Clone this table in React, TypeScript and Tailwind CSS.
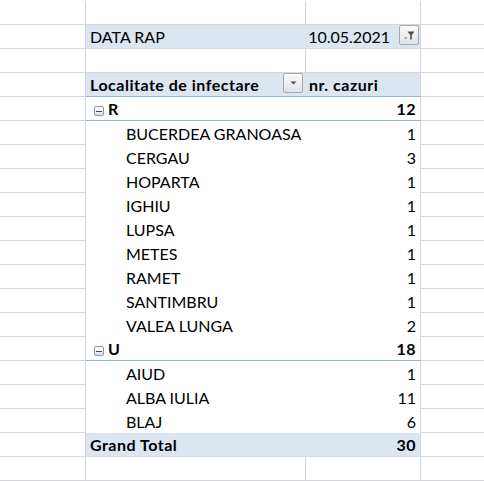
const GRID = "border-[#d4d8de]";

type Kind = "empty" | "filter" | "header" | "group" | "item" | "total";

type RowData = { kind: Kind; label?: string; value?: string };

const rows: RowData[] = [
  { kind: "empty" },
  { kind: "filter", label: "DATA RAP", value: "10.05.2021" },
  { kind: "empty" },
  { kind: "header", label: "Localitate de infectare", value: "nr. cazuri" },
  { kind: "group", label: "R", value: "12" },
  { kind: "item", label: "BUCERDEA GRANOASA", value: "1" },
  { kind: "item", label: "CERGAU", value: "3" },
  { kind: "item", label: "HOPARTA", value: "1" },
  { kind: "item", label: "IGHIU", value: "1" },
  { kind: "item", label: "LUPSA", value: "1" },
  { kind: "item", label: "METES", value: "1" },
  { kind: "item", label: "RAMET", value: "1" },
  { kind: "item", label: "SANTIMBRU", value: "1" },
  { kind: "item", label: "VALEA LUNGA", value: "2" },
  { kind: "group", label: "U", value: "18" },
  { kind: "item", label: "AIUD", value: "1" },
  { kind: "item", label: "ALBA IULIA", value: "11" },
  { kind: "item", label: "BLAJ", value: "6" },
  { kind: "total", label: "Grand Total", value: "30" },
  { kind: "empty" },
];

function DropButton({ filter }: { filter?: boolean }) {
  return (
    <div className="flex h-[20px] w-[20px] items-center justify-center rounded-[2px] border border-[#a7abb0] bg-gradient-to-b from-[#fbfbfb] to-[#dfe2e6]">
      {filter ? (
        <svg width="13" height="11" viewBox="0 0 13 11">
          <path d="M4.5 1.5h7L8.8 5v4L7.2 10V5z" fill="#4a4f57" />
          <path d="M1.5 7.5h2.4L2.7 9z" fill="#4a4f57" />
        </svg>
      ) : (
        <svg width="9" height="6" viewBox="0 0 9 6">
          <path d="M1.5 1.5h6L4.5 4.5z" fill="#4a4f57" />
        </svg>
      )}
    </div>
  );
}

function MinusBox() {
  return (
    <div className="mr-[4px] flex h-[10px] w-[10px] items-center justify-center rounded-[2px] border border-[#8e9aaa] bg-gradient-to-b from-[#ffffff] to-[#dde2e8]">
      <div className="h-px w-[6px] bg-[#3f4650]" />
    </div>
  );
}

function Row({ r }: { r: RowData }) {
  const base = "flex h-6 items-end pb-[3px] leading-none";
  const bold = "font-bold tracking-[0.5px]";
  let b: React.ReactNode;
  let c: React.ReactNode;

  if (r.kind === "empty") {
    b = <div className={`${base} border-b border-r ${GRID}`} />;
    c = <div className={`${base} border-b border-r ${GRID}`} />;
  } else if (r.kind === "filter") {
    b = (
      <div className={`${base} border-b ${GRID} bg-[#dce6f1] pl-[4px]`}>{r.label}</div>
    );
    c = (
      <div className={`${base} border-b border-r ${GRID} items-center justify-end bg-[#dce6f1] pb-0 pr-px`}>
        <span className="mr-[9px] mt-[1px]">{r.value}</span>
        <DropButton filter />
      </div>
    );
  } else if (r.kind === "header") {
    b = (
      <div className={`${base} items-center justify-between border-b border-[#95b3d7] bg-[#dce6f1] pb-0 pl-[4px] pr-[3px]`}>
        <span className={`mt-[1px] ${bold}`}>{r.label}</span>
        <DropButton />
      </div>
    );
    c = (
      <div className={`${base} border-b border-r border-b-[#95b3d7] border-r-[#d4d8de] bg-[#dce6f1] pl-[3px] ${bold}`}>
        {r.value}
      </div>
    );
  } else if (r.kind === "group") {
    b = (
      <div className={`${base} border-b border-[#95b3d7] pl-[8px] ${bold}`}>
        <div className="mb-[1px]">
          <MinusBox />
        </div>
        {r.label}
      </div>
    );
    c = (
      <div className={`${base} justify-end border-b border-r border-b-[#95b3d7] border-r-[#d4d8de] pr-[4px] ${bold}`}>
        {r.value}
      </div>
    );
  } else if (r.kind === "item") {
    b = <div className={`${base} pl-[40px]`}>{r.label}</div>;
    c = <div className={`${base} justify-end border-r ${GRID} pr-[4px]`}>{r.value}</div>;
  } else {
    b = (
      <div className={`${base} border-b ${GRID} bg-[#dce6f1] pl-[4px] ${bold}`}>{r.label}</div>
    );
    c = (
      <div className={`${base} justify-end border-b border-r ${GRID} bg-[#dce6f1] pr-[4px] ${bold}`}>
        {r.value}
      </div>
    );
  }

  return (
    <div className="grid grid-cols-[86px_220px_115px_63px]">
      <div className={`h-6 border-b border-r ${GRID}`} />
      {b}
      {c}
      <div className={`h-6 border-b ${GRID}`} />
    </div>
  );
}

export default function App() {
  return (
    <div
      className="w-[484px] bg-white pt-px text-[16px] text-black"
      style={{ fontFamily: "Lato, 'Open Sans', sans-serif" }}
    >
      {rows.map((r, i) => (
        <Row key={i} r={r} />
      ))}
    </div>
  );
}
